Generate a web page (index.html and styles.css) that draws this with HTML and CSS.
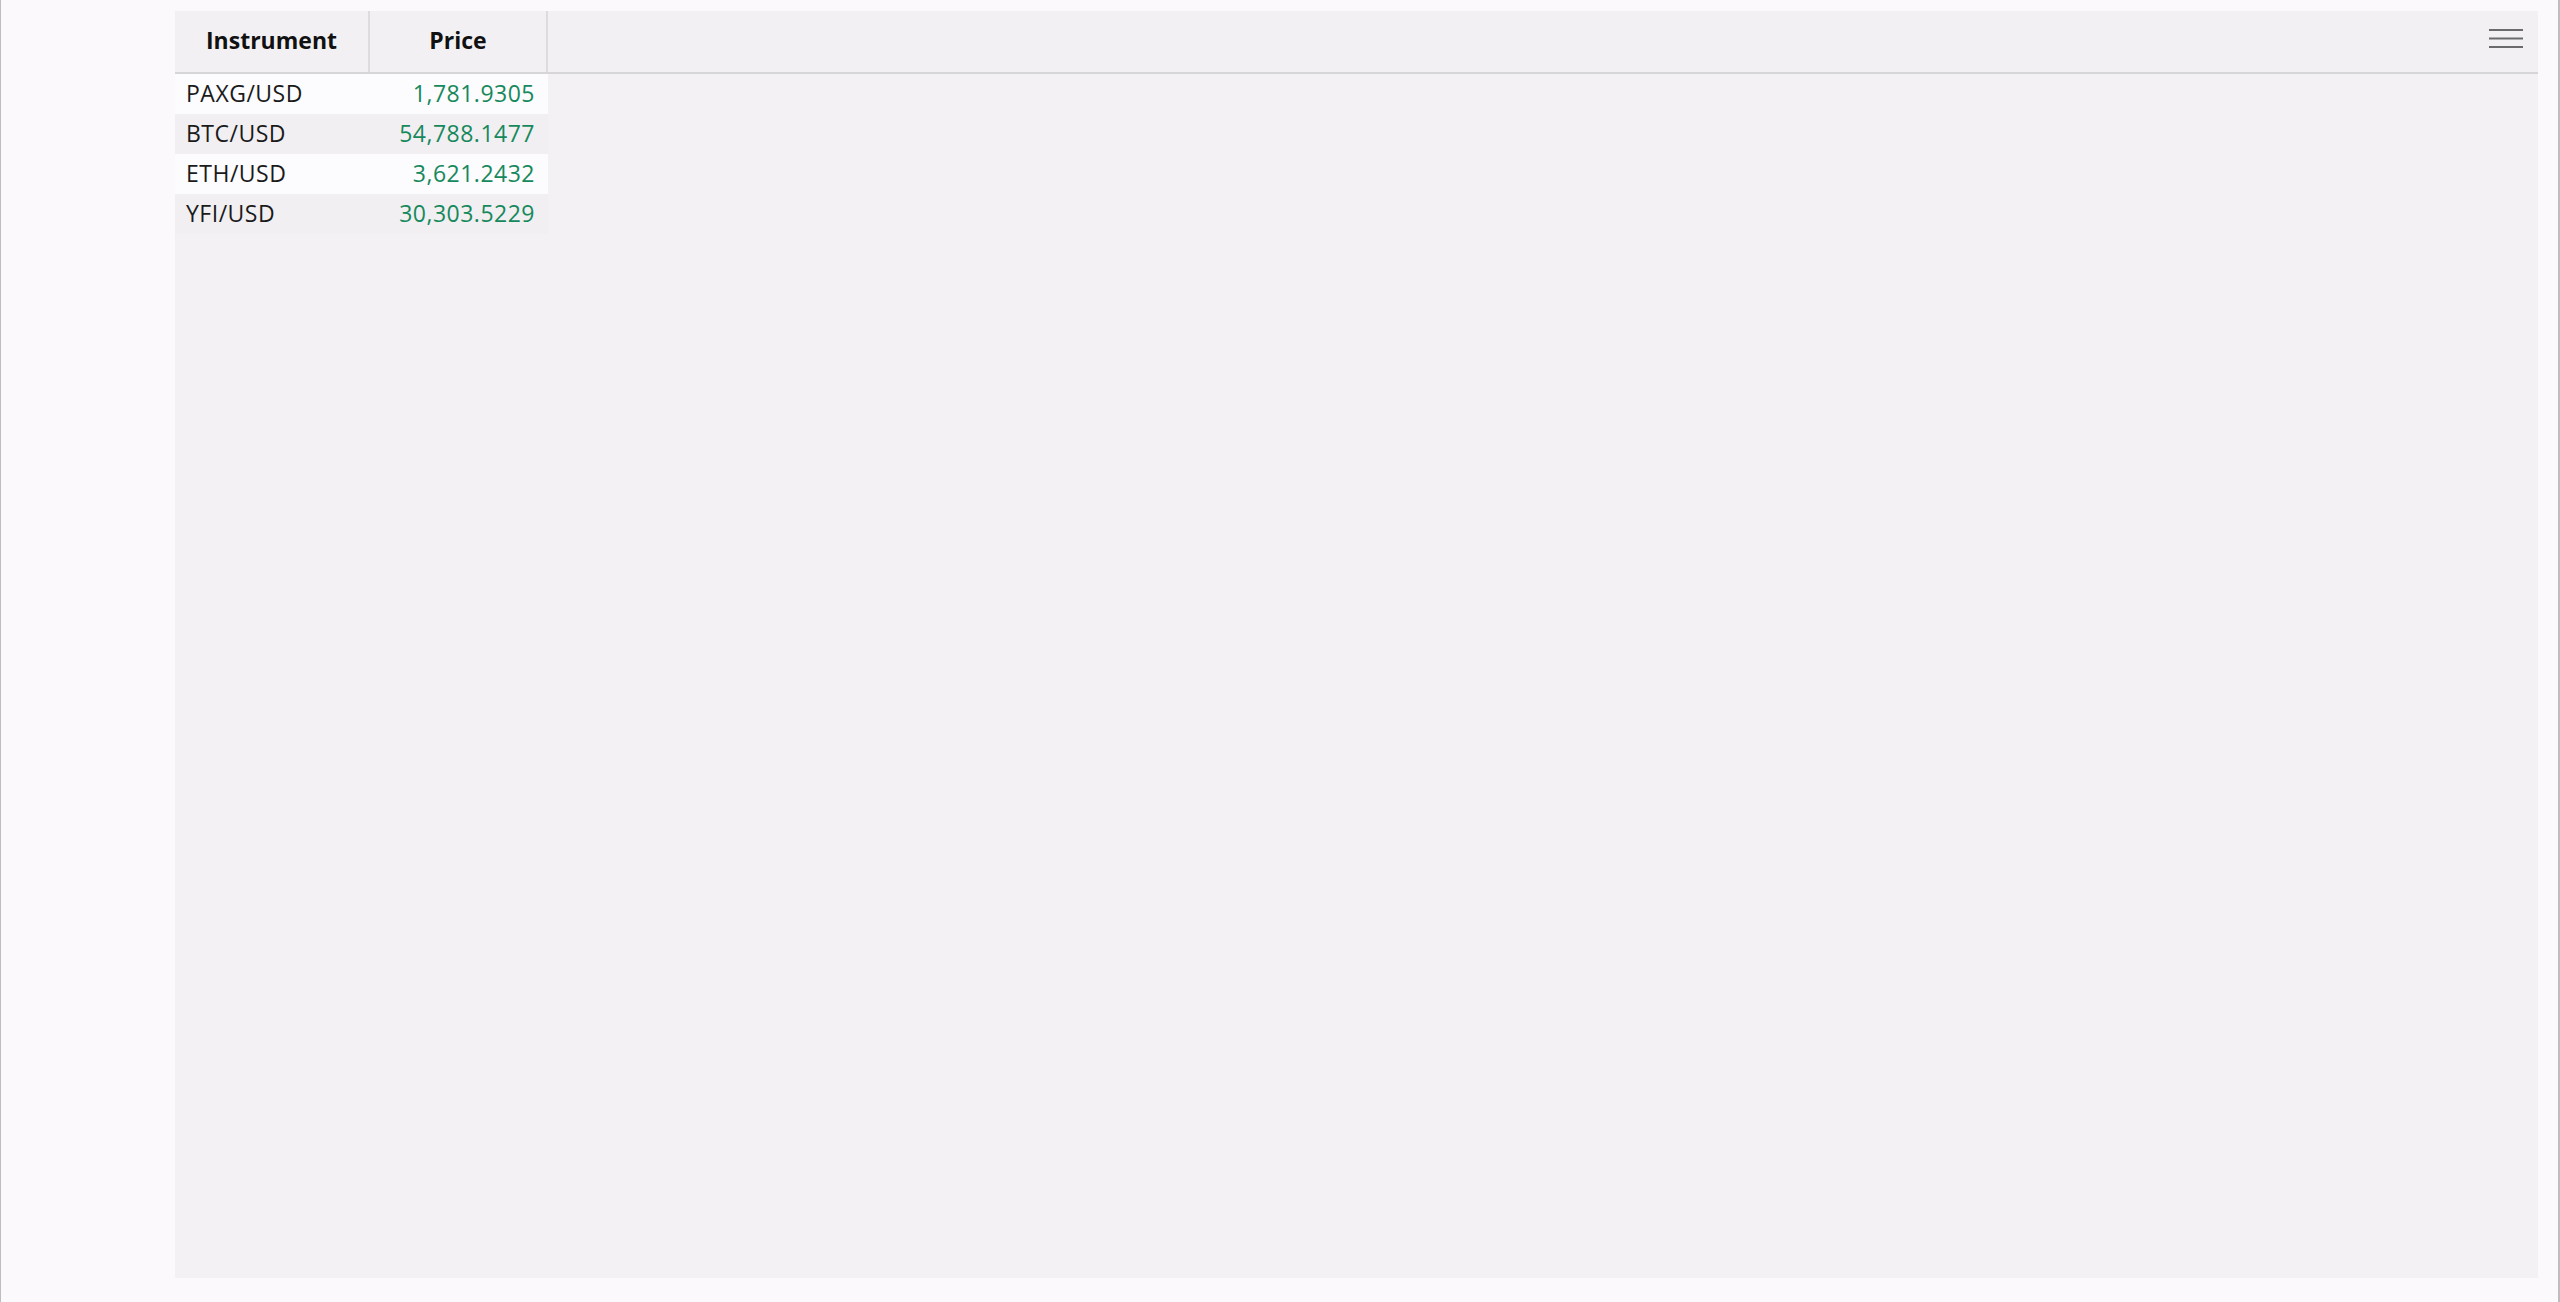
FILE: index.html
```html
<!DOCTYPE html>
<html>
<head>
<meta charset="utf-8">
<link rel="stylesheet" href="styles.css">
</head>
<body>
<div class="frame">
  <div class="panel">
    <div class="header">
      <div class="hcell col-inst">Instrument</div>
      <div class="hcell col-price">Price</div>
      <div class="hspacer"></div>
      <button class="menu" aria-label="menu">
        <svg width="34" height="20" viewBox="0 0 34 20"><rect x="0" y="1" width="34" height="2" fill="#6b6a6d"/><rect x="0" y="9.5" width="34" height="2" fill="#6b6a6d"/><rect x="0" y="18" width="34" height="2" fill="#6b6a6d"/></svg>
      </button>
    </div>
    <div class="rows">
      <div class="row odd"><div class="cell col-inst">PAXG/USD</div><div class="cell col-price num">1,781.9305</div></div>
      <div class="row even"><div class="cell col-inst">BTC/USD</div><div class="cell col-price num">54,788.1477</div></div>
      <div class="row odd"><div class="cell col-inst">ETH/USD</div><div class="cell col-price num">3,621.2432</div></div>
      <div class="row even"><div class="cell col-inst">YFI/USD</div><div class="cell col-price num">30,303.5229</div></div>
    </div>
  </div>
</div>
</body>
</html>
```

FILE: styles.css
```css
html, body {
  margin: 0;
  padding: 0;
  height: 100%;
}
body {
  background: #fbf9fc;
  font-family: "Open Sans", "Noto Sans", sans-serif;
}
.frame {
  box-sizing: border-box;
  height: 1302px;
  border-left: 1px solid #bdbcbf;
  border-right: 2px solid #bdbcbf;
  padding: 11px 20px 24px 174px;
  display: flex;
}
.panel {
  flex: 1;
  background: #f3f1f4;
  display: flex;
  flex-direction: column;
}
.header {
  display: flex;
  align-items: stretch;
  height: 61px;
  border-bottom: 2px solid #d6d5d8;
  background: #f2f0f3;
}
.hcell {
  box-sizing: border-box;
  display: flex;
  align-items: center;
  justify-content: center;
  font-weight: 700;
  font-size: 23px;
  color: #111;
  padding-bottom: 3px;
  border-right: 2px solid #dcdbde;
}
.col-inst { width: 195px; flex: none; box-sizing: border-box; }
.col-price { width: 178px; flex: none; box-sizing: border-box; }
.hspacer { flex: 1; }
.menu {
  border: 0;
  background: transparent;
  padding: 0;
  margin: 17px 15px 0 0;
  height: 22px;
  align-self: flex-start;
  display: flex;
}
.rows {
  display: flex;
  flex-direction: column;
}
.row {
  display: flex;
  height: 40px;
  width: 373px;
}
.row.odd { background: #fcfbfd; }
.row.even { background: #f1eff2; }
.cell {
  display: flex;
  align-items: center;
  font-size: 23px;
  color: #1a1a1a;
  letter-spacing: 0.5px;
  padding-bottom: 3px;
}
.cell.col-inst { padding-left: 11px; }
.cell.num {
  justify-content: flex-end;
  padding-right: 13px;
  color: #16895c;
}
```
